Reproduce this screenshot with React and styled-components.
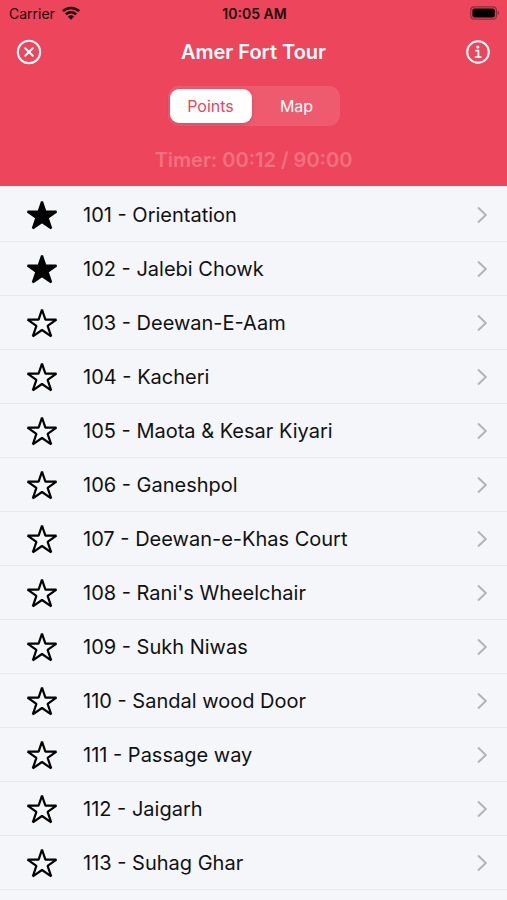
import React, { useState } from "react";
import styled, { createGlobalStyle } from "styled-components";

const points = [
  { id: 101, name: "Orientation" },
  { id: 102, name: "Jalebi Chowk" },
  { id: 103, name: "Deewan-E-Aam" },
  { id: 104, name: "Kacheri" },
  { id: 105, name: "Maota & Kesar Kiyari" },
  { id: 106, name: "Ganeshpol" },
  { id: 107, name: "Deewan-e-Khas Court" },
  { id: 108, name: "Rani's Wheelchair" },
  { id: 109, name: "Sukh Niwas" },
  { id: 110, name: "Sandal wood Door" },
  { id: 111, name: "Passage way" },
  { id: 112, name: "Jaigarh" },
  { id: 113, name: "Suhag Ghar" },
];

const tabs = ["Points", "Map"];

const WifiIcon = () => (
  <svg width="18" height="14" viewBox="0 0 18 14" aria-hidden="true">
    <g fill="none" stroke="#1a0508" strokeWidth="2.5">
      <path d="M0.9 5.2a11.6 11.6 0 0 1 16.2 0" />
      <path d="M3.9 8.3a7.3 7.3 0 0 1 10.2 0" />
    </g>
    <path d="M5.9 10.6a4.4 4.4 0 0 1 6.2 0L9 13.8z" fill="#1a0508" />
  </svg>
);

const BatteryIcon = () => (
  <svg width="30" height="14" viewBox="0 0 30 14" aria-hidden="true">
    <rect x="0.8" y="0.8" width="25.6" height="12.4" rx="3.5" fill="none" stroke="#8f2c3a" strokeWidth="1.2" />
    <rect x="2.4" y="2.4" width="22.4" height="9.2" rx="2" fill="#000" />
    <path d="M27.6 4.8c2 .6 2 3.8 0 4.4z" fill="#8f2c3a" />
  </svg>
);

const CloseIcon = () => (
  <svg width="26" height="26" viewBox="0 0 26 26" aria-hidden="true">
    <g fill="none" stroke="#fff" strokeWidth="2" strokeLinecap="round">
      <circle cx="13" cy="13" r="11.2" />
      <path d="M9.2 9.2l7.6 7.6M16.8 9.2l-7.6 7.6" />
    </g>
  </svg>
);

const InfoIcon = () => (
  <svg width="26" height="26" viewBox="0 0 26 26" aria-hidden="true">
    <circle cx="13" cy="13" r="10.8" fill="none" stroke="#fff" strokeWidth="2" />
    <circle cx="12.8" cy="8" r="1.6" fill="#fff" />
    <path d="M10.3 11.6h3.1v6.6M9.8 18.2h6.6" fill="none" stroke="#fff" strokeWidth="1.8" />
  </svg>
);

const StarIcon = ({ filled }) => (
  <svg width="32" height="30" viewBox="0 0 32 30" aria-hidden="true">
    <path
      d="M16 1.6L19.4 11.6H30.4L21.6 17.9L25.2 28.3L16 22L6.8 28.3L10.4 17.9L1.6 11.6H12.6Z"
      fill={filled ? "#000" : "none"}
      stroke="#000"
      strokeWidth="2.2"
      strokeLinejoin="bevel"
    />
  </svg>
);

const ChevronIcon = () => (
  <svg width="12" height="18" viewBox="0 0 12 18" aria-hidden="true">
    <path d="M2 1.5L9.8 9L2 16.5" fill="none" stroke="#b4b4b7" strokeWidth="2" />
  </svg>
);

function App() {
  const [activeTab, setActiveTab] = useState("Points");
  const [starred, setStarred] = useState([101, 102]);

  const toggleStar = (id) => {
    setStarred(
      starred.includes(id) ? starred.filter((s) => s !== id) : [...starred, id]
    );
  };

  return (
    <>
      <GlobalStyle />
      <Header>
        <StatusBar>
          <Carrier>
            Carrier
            <WifiIcon />
          </Carrier>
          <Clock>10:05 AM</Clock>
          <Battery>
            <BatteryIcon />
          </Battery>
        </StatusBar>
        <NavBar>
          <IconButton aria-label="Close">
            <CloseIcon />
          </IconButton>
          <Title>Amer Fort Tour</Title>
          <IconButton aria-label="Info">
            <InfoIcon />
          </IconButton>
        </NavBar>
        <Segments>
          {tabs.map((tab) => (
            <Segment
              key={tab}
              $active={tab === activeTab}
              aria-pressed={tab === activeTab}
              onClick={() => setActiveTab(tab)}
            >
              {tab}
            </Segment>
          ))}
        </Segments>
        <Timer>Timer: 00:12 / 90:00</Timer>
      </Header>
      <List>
        {points.map(({ id, name }) => (
          <Row key={id}>
            <StarButton
              aria-label={`Star ${name}`}
              aria-pressed={starred.includes(id)}
              onClick={() => toggleStar(id)}
            >
              <StarIcon filled={starred.includes(id)} />
            </StarButton>
            <PointLink href={`#${id}`}>
              <span>
                {id} - {name}
              </span>
              <ChevronIcon />
            </PointLink>
          </Row>
        ))}
      </List>
    </>
  );
}

export default App;

const GlobalStyle = createGlobalStyle`
  * {
    box-sizing: border-box;
  }

  body {
    margin: 0;
    background: #f4f6fa;
    font-family: Inter, "Liberation Sans", sans-serif;
  }

  button {
    border: 0;
    padding: 0;
    background: none;
    font-family: inherit;
    cursor: pointer;
  }

  svg {
    display: block;
    flex-shrink: 0;
  }
`;

const Header = styled.header`
  display: flex;
  flex-direction: column;
  align-items: center;
  padding-bottom: 14px;
  background: #ed455c;
`;

const StatusBar = styled.div`
  display: grid;
  grid-template-columns: 1fr auto 1fr;
  align-items: center;
  width: 100%;
  height: 28px;
  padding: 0 7px 2px 9px;
  color: #1a0508;
  font-size: 14px;
`;

const Carrier = styled.div`
  display: flex;
  align-items: center;
  gap: 7px;
`;

const Clock = styled.time`
  font-weight: 600;
`;

const Battery = styled.div`
  justify-self: end;
`;

const NavBar = styled.div`
  display: flex;
  align-items: center;
  justify-content: space-between;
  width: 100%;
  height: 48px;
  padding: 0 16px;
`;

const IconButton = styled.button`
  width: 26px;
  height: 26px;
`;

const Title = styled.h1`
  margin: 0;
  color: #fff;
  font-size: 20px;
  font-weight: 600;
`;

const Segments = styled.div`
  display: flex;
  gap: 4px;
  margin-top: 10px;
  padding: 3px 2px;
  border-radius: 11px;
  background: #ef5b6e;
`;

const Segment = styled.button`
  width: 82px;
  height: 34px;
  border-radius: 9px;
  background: ${({ $active }) => ($active ? "#fff" : "transparent")};
  box-shadow: ${({ $active }) =>
    $active ? "0 1px 4px rgba(0, 0, 0, 0.15)" : "none"};
  color: ${({ $active }) => ($active ? "#ed455c" : "#fff")};
  font-size: 16px;
`;

const Timer = styled.p`
  margin: 22px 0 0;
  color: #f3727f;
  font-size: 20px;
  font-weight: 600;
  line-height: 24px;
`;

const List = styled.ul`
  margin: 0;
  padding: 2px 0 0;
  list-style: none;
`;

const Row = styled.li`
  display: flex;
  align-items: center;
  height: 54px;
  padding-left: 26px;
  border-bottom: 1px solid #e8e9ed;
`;

const StarButton = styled.button`
  width: 32px;
  height: 30px;
`;

const PointLink = styled.a`
  display: flex;
  flex: 1;
  align-items: center;
  justify-content: space-between;
  height: 100%;
  padding: 0 19px 0 25px;
  color: #111;
  font-size: 20px;
  text-decoration: none;
`;
